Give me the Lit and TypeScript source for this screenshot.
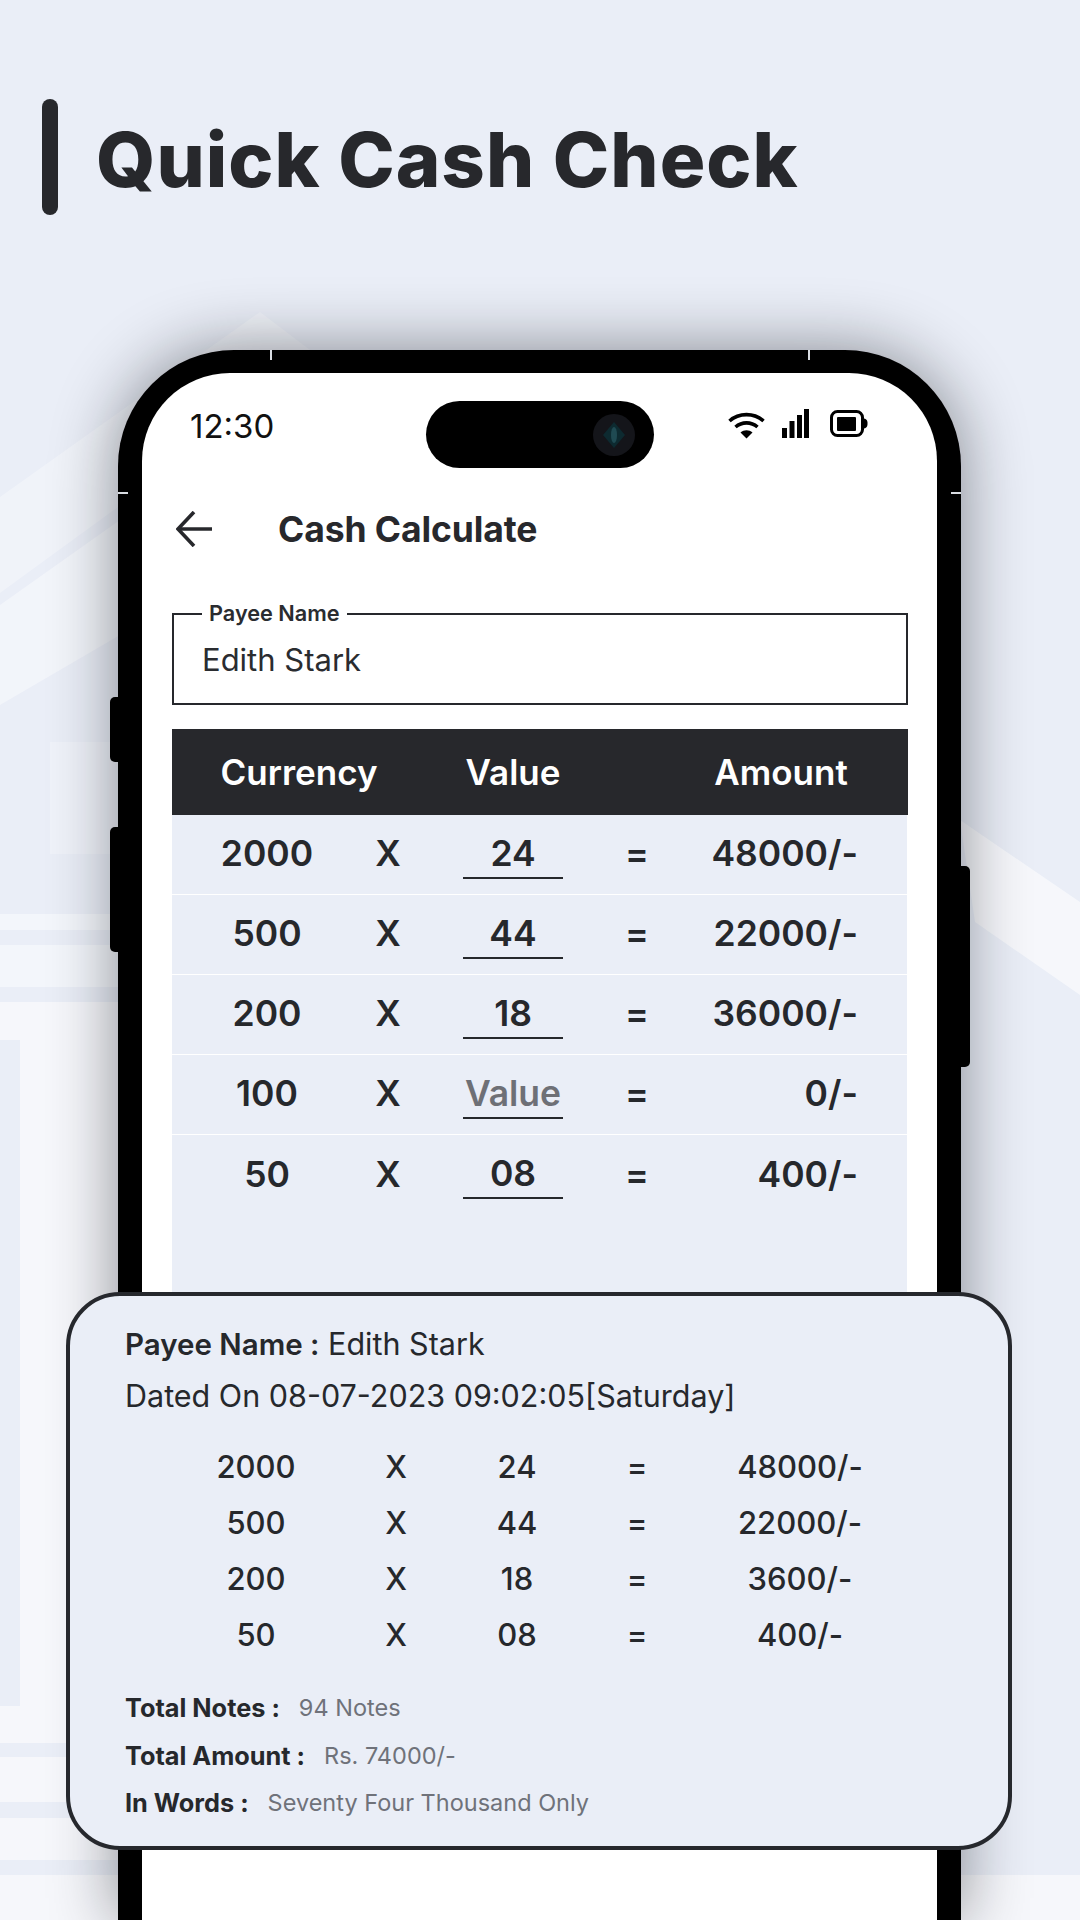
import { LitElement, html, css } from "lit";
import { customElement } from "lit/decorators.js";

const rows = [
  ["2000", "24", "48000/-"],
  ["500", "44", "22000/-"],
  ["200", "18", "36000/-"],
  ["100", "", "0/-"],
  ["50", "08", "400/-"],
];
const receipt = [
  ["2000", "24", "48000/-"],
  ["500", "44", "22000/-"],
  ["200", "18", "3600/-"],
  ["50", "08", "400/-"],
];
const totals = [
  ["Total Notes :", "94 Notes"],
  ["Total Amount :", "Rs. 74000/-"],
  ["In Words :", "Seventy Four Thousand Only"],
];

@customElement("app-root")
export class AppRoot extends LitElement {
  static styles = css`
    :host {
      display: block;
      position: relative;
      width: 1080px;
      height: 1920px;
      overflow: hidden;
      background: #eaeef7;
      font-family: Inter, "Liberation Sans", sans-serif;
      color: #26282c;
    }
    .decor { position: absolute; inset: 0; }
    .head {
      position: relative;
      display: flex;
      gap: 38px;
      padding: 99px 0 0 42px;
    }
    .bar { width: 16px; height: 116px; border-radius: 8px; background: #27282c; }
    h1 {
      margin: 2px 0 0;
      font-size: 76px;
      font-weight: 800;
      line-height: 116px;
      letter-spacing: 1px;
      color: #27282c;
    }
    .phone {
      position: relative;
      box-sizing: border-box;
      width: 843px;
      height: 1570px;
      margin: 133px 0 0 118px;
      padding: 23px 24px 0;
      background: #000;
      border-radius: 116px 116px 0 0;
      box-shadow: 0 0 66px rgba(10, 12, 20, 0.46);
    }
    .btn { position: absolute; background: #000; }
    .btn.l { left: -8px; width: 8px; border-radius: 5px 0 0 5px; }
    .btn.r { right: -9px; width: 9px; top: 516px; height: 201px; border-radius: 0 5px 5px 0; }
    .ant { position: absolute; background: #d9dce2; }
    .ant.t { top: 0; width: 2px; height: 10px; }
    .ant.s { top: 142px; width: 10px; height: 2px; }
    .screen {
      height: 100%;
      background: #fff;
      border-radius: 88px 88px 0 0;
      display: flex;
      flex-direction: column;
    }
    .status { display: flex; align-items: flex-start; padding: 28px 0 0 48px; height: 67px; }
    .time { width: 236px; font-size: 33px; line-height: 50px; color: #111; }
    .pill {
      width: 228px;
      height: 67px;
      border-radius: 34px;
      background: #000;
      display: flex;
      justify-content: flex-end;
      align-items: center;
      padding-right: 19px;
      box-sizing: border-box;
    }
    .status-icons { display: flex; align-items: flex-start; margin: 8px 0 0 74px; gap: 17px; }
    .status-icons svg { display: block; }
    .appbar { display: flex; align-items: center; height: 60px; margin-top: 31px; padding-left: 34px; gap: 66px; }
    .appbar svg { display: block; }
    .appbar h2 { margin: 0; font-size: 35.5px; font-weight: 700; color: #27282c; letter-spacing: -0.1px; }
    .field {
      position: relative;
      box-sizing: border-box;
      width: 736px;
      height: 92px;
      margin: 54px 0 0 30px;
      border: 2px solid #26282c;
      padding: 0 28px;
      display: flex;
      align-items: center;
      font-size: 31px;
      color: #2a2c30;
    }
    .legend {
      position: absolute;
      left: 28px;
      top: -15px;
      padding: 0 7px;
      background: #fff;
      font-size: 21.7px;
      line-height: 26px;
      font-weight: 600;
    }
    .table { width: 736px; margin: 24px 0 0 30px; }
    .thead {
      display: grid;
      grid-template-columns: 254px 174px 1fr;
      align-items: center;
      height: 86px;
      background: #27282c;
      color: #fff;
      font-size: 35px;
      font-weight: 600;
      text-align: center;
    }
    .thead span:last-child { padding-left: 54px; }
    .tbody { width: 735px; height: 640px; background: #eaeef7; }
    .row {
      box-sizing: border-box;
      display: grid;
      grid-template-columns: 190px 52px 198px 50px 1fr;
      align-items: center;
      height: 80px;
      padding: 0 49px 2px 0;
      border-bottom: 1px solid #fff;
      font-size: 35.5px;
      font-weight: 600;
      text-align: center;
      color: #26282c;
    }
    .row:last-child { border-bottom: 0; }
    .val {
      box-sizing: border-box;
      justify-self: center;
      width: 100px;
      height: 48px;
      line-height: 46px;
      margin-top: 2px;
      border-bottom: 2px solid #26282c;
    }
    .val.empty { color: #6e7076; }
    .amt { text-align: right; }
    .panel {
      position: absolute;
      left: 66px;
      top: 1292px;
      box-sizing: border-box;
      width: 946px;
      height: 558px;
      padding: 22px 0 0 55px;
      background: #eaeef7;
      border: 4px solid #26282d;
      border-radius: 54px;
    }
    .line { font-size: 30.5px; line-height: 51px; color: #26282c; white-space: nowrap; }
    .line b { font-size: 29.5px; font-weight: 600; }
    .rc { margin: 18px 0 21px 56px; }
    .rc-row {
      display: grid;
      grid-template-columns: 150px 130px 112px 128px 198px;
      height: 56px;
      line-height: 56px;
      font-size: 31px;
      font-weight: 500;
      text-align: center;
      color: #26282c;
    }
    .tot { display: flex; gap: 19px; height: 47.5px; line-height: 47.5px; font-size: 25.3px; white-space: nowrap; }
    .tot b { font-weight: 700; color: #26282c; }
    .tot span { color: #6f727a; font-weight: 400; font-size: 23.5px; }
  `;

  render() {
    return html`
      <svg class="decor" width="1080" height="1920" viewBox="0 0 1080 1920" fill="#fff">
        <polygon opacity=".3" points="0,497 260,312 310,350 118,507 0,593" />
        <polygon opacity=".4" points="0,605 120,520 120,635 0,705" />
        <polygon opacity=".55" points="960,820 1080,902 1080,995 975,922" />
        <rect opacity=".25" x="50" y="742" width="70" height="112" />
        <rect opacity=".45" x="0" y="914" width="120" height="16" />
        <rect opacity=".45" x="0" y="945" width="120" height="42" />
        <polygon opacity=".55" points="0,1002 120,1002 120,1743 0,1743 0,1706 20,1706 20,1040 0,1040" />
        <rect opacity=".55" x="0" y="1757" width="120" height="45" />
        <rect opacity=".55" x="0" y="1818" width="120" height="42" />
        <rect opacity=".55" x="0" y="1875" width="1080" height="45" />
      </svg>

      <header class="head">
        <div class="bar"></div>
        <h1>Quick Cash Check</h1>
      </header>

      <section class="phone">
        <i class="btn l" style="top:347px;height:65px"></i>
        <i class="btn l" style="top:477px;height:125px"></i>
        <i class="btn r"></i>
        <i class="ant t" style="left:152px"></i>
        <i class="ant t" style="left:690px"></i>
        <i class="ant s" style="left:0"></i>
        <i class="ant s" style="right:0"></i>

        <div class="screen">
          <div class="status">
            <div class="time">12:30</div>
            <div class="pill">
              <svg width="42" height="42" viewBox="0 0 42 42">
                <circle cx="21" cy="21" r="21" fill="#14151a" />
                <polygon points="21,8 32,21 21,34 10,21" fill="#0d2a30" />
                <ellipse cx="21" cy="21" rx="3" ry="8" fill="#1f4a52" />
              </svg>
            </div>
            <div class="status-icons">
              <svg width="37" height="29" viewBox="0 0 37 29" style="margin-top:2px">
                <g fill="none" stroke="#000" stroke-width="3.6">
                  <path d="M1.5 10 C11 1.5 26 1.5 35.5 10" />
                  <path d="M7.5 16 C14 10.5 23 10.5 29.5 16" />
                </g>
                <path d="M12.5 21.5 C16 18.5 21 18.5 24.5 21.5 L18.5 27.5 Z" fill="#000" />
              </svg>
              <svg width="27" height="29" viewBox="0 0 27 29">
                <rect x="0" y="19" width="5" height="10" />
                <rect x="7.5" y="12" width="5" height="17" />
                <rect x="15" y="6" width="5" height="23" />
                <rect x="22" y="0" width="5" height="29" />
              </svg>
              <svg width="38" height="28" viewBox="0 0 38 28" style="margin:1px 0 0 4px">
                <rect x="1.5" y="1.5" width="31" height="24" rx="6" fill="none" stroke="#000" stroke-width="3" />
                <rect x="7" y="7" width="19" height="14" rx="1" />
                <path d="M34 8.5 C37 9 37.5 11 37.5 13.5 C37.5 16 37 18 34 18.5 Z" />
              </svg>
            </div>
          </div>

          <div class="appbar">
            <svg width="36" height="36" viewBox="0 0 36 36" fill="none" stroke="#27282c" stroke-width="3.6">
              <path d="M36 18 H2" />
              <path d="M18 1 L2 18 L18 35" />
            </svg>
            <h2>Cash Calculate</h2>
          </div>

          <div class="field">
            <span class="legend">Payee Name</span>
            Edith Stark
          </div>

          <div class="table">
            <div class="thead"><span>Currency</span><span>Value</span><span>Amount</span></div>
            <div class="tbody">
              ${rows.map(
                ([cur, val, amt]) => html`
                  <div class="row">
                    <span>${cur}</span>
                    <span>X</span>
                    <span class="val ${val ? "" : "empty"}">${val || "Value"}</span>
                    <span>=</span>
                    <span class="amt">${amt}</span>
                  </div>
                `
              )}
            </div>
          </div>
        </div>
      </section>

      <aside class="panel">
        <div class="line"><b>Payee Name :</b> Edith Stark</div>
        <div class="line">Dated On 08-07-2023 09:02:05[Saturday]</div>
        <div class="rc">
          ${receipt.map(
            ([cur, val, amt]) => html`
              <div class="rc-row">
                <span>${cur}</span><span>X</span><span>${val}</span><span>=</span><span>${amt}</span>
              </div>
            `
          )}
        </div>
        ${totals.map(([k, v]) => html`<div class="tot"><b>${k}</b><span>${v}</span></div>`)}
      </aside>
    `;
  }
}
